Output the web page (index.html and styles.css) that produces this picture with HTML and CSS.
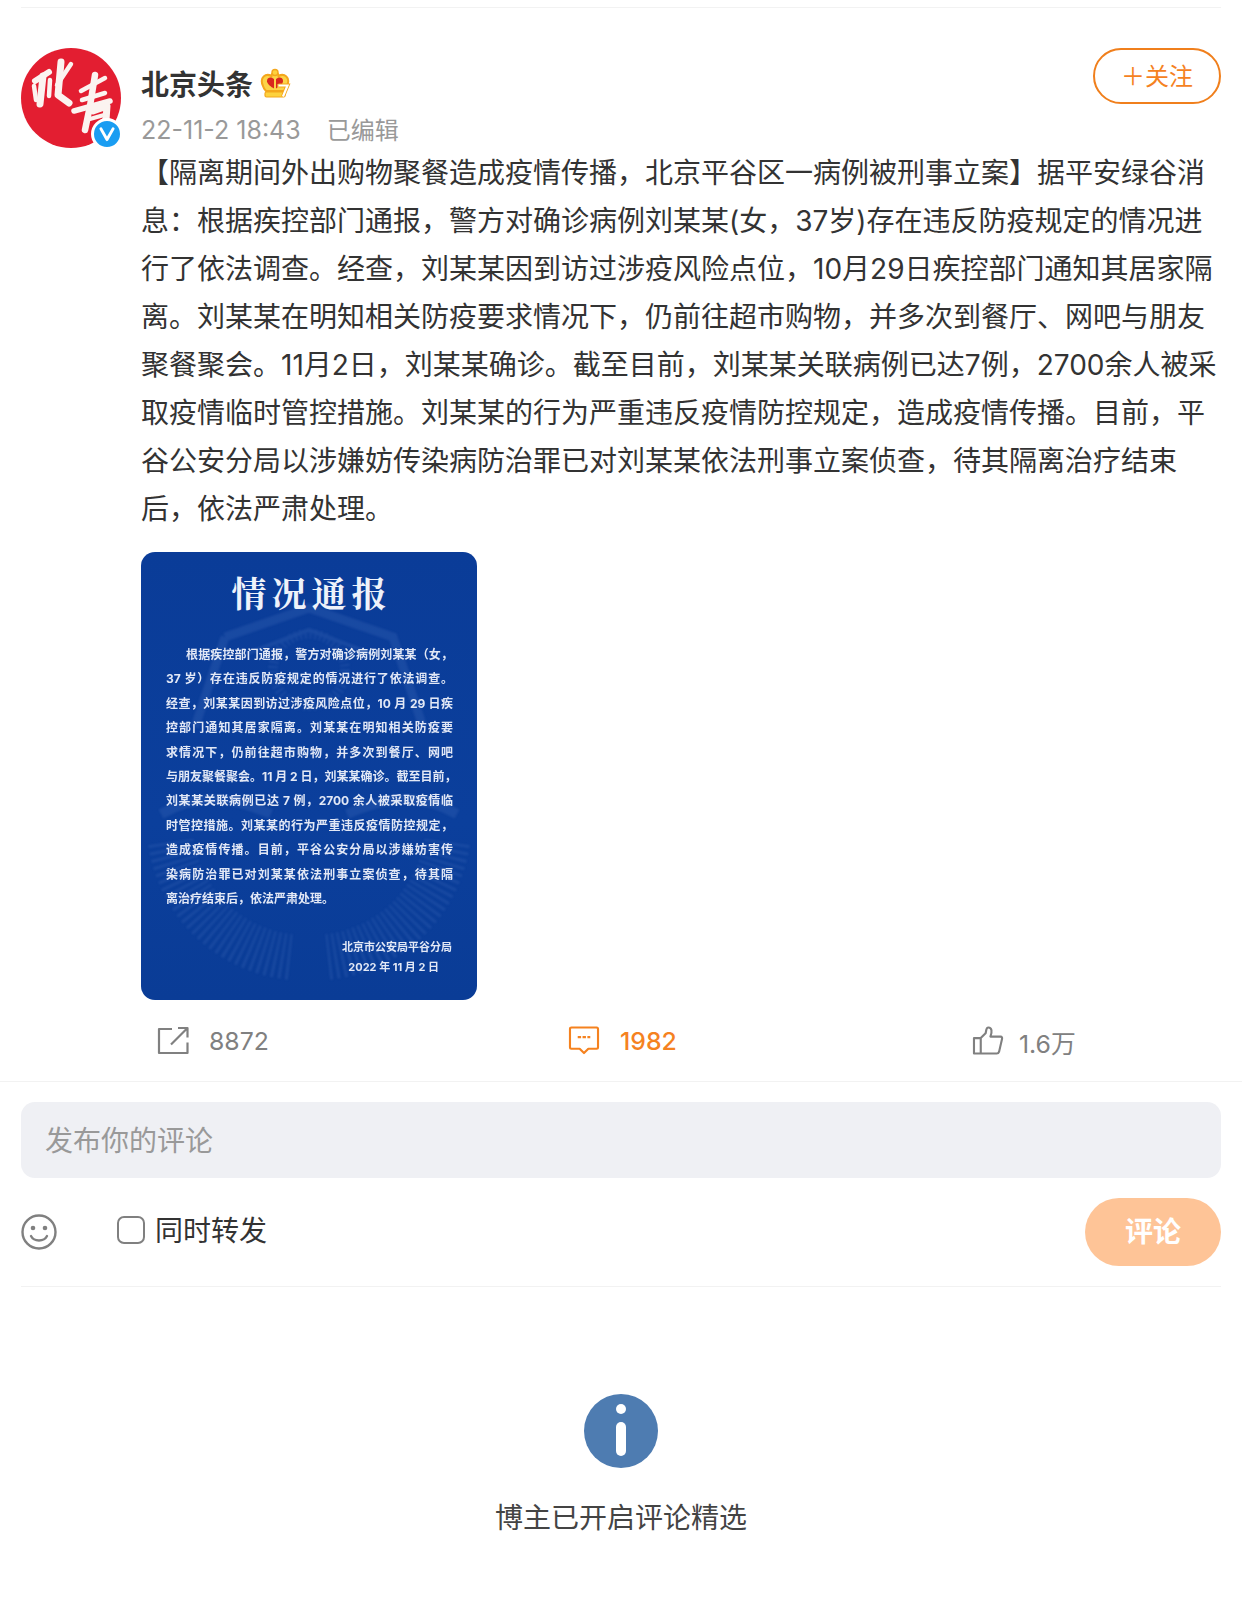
FILE: index.html
```html
<!DOCTYPE html>
<html lang="zh-CN">
<head>
<meta charset="utf-8">
<title>北京头条</title>
<link rel="stylesheet" href="styles.css">
</head>
<body>
<div class="rule"></div>
<article class="post">
  <div class="avatar">
    <svg class="avatar-svg" viewBox="0 0 100 100" aria-label="北青">
      <circle cx="50" cy="50" r="50" fill="#e31e31"/>
      <g fill="none" stroke="#fbf3f0" stroke-linecap="round" stroke-linejoin="round">
        <path d="M14 33 L28 24" stroke-width="6"/>
        <path d="M22 28 L19 56" stroke-width="7"/>
        <path d="M13 38 L15 52" stroke-width="4.5"/>
        <path d="M29 32 L28 48" stroke-width="4.5"/>
        <path d="M40 14 L37 47 L48 55" stroke-width="7"/>
        <path d="M50 16 L36 37" stroke-width="4.5"/>
        <path d="M60 43 L84 30" stroke-width="4.5"/>
        <path d="M61 52 L84 45" stroke-width="4.5"/>
        <path d="M53 63 L89 53" stroke-width="5.5"/>
        <path d="M74 27 L69 58 L64 82" stroke-width="6.5"/>
        <path d="M72 63 L86 58 L85 72 L77 79" stroke-width="7"/>
        <path d="M69 71 L83 67" stroke-width="4"/>
      </g>
    </svg>
    <span class="badge">
      <svg viewBox="0 0 28 28" class="badge-svg"><path d="M7.5 8.5 L14 20 L20.5 8.5" fill="none" stroke="#fff" stroke-width="3.2" stroke-linecap="round" stroke-linejoin="round"/></svg>
    </span>
  </div>
  <div class="main">
    <header class="head">
      <div class="meta">
        <div class="name-row">
          <span class="name">北京头条</span>
          <svg class="crown" viewBox="0 0 32 30">
            <path d="M4 18 C0 9 7 5 12.500 8 C13 3 19 3 19.500 8 C25 5 32 9 28 18 C27.500 20 26 22 25 23 H7 C6 22 4.500 20 4 18 Z" fill="#fcd448" stroke="#f4a71d" stroke-width="2"/>
            <path d="M15 11 C12 8 7.500 9.500 8 13.500 C8.500 16 12 19 15 20.500 Z" fill="#d9281e"/>
            <path d="M17 11 C20 8 24.500 9.500 24 13.500 C23.800 14.500 23.500 15 23 16 H18.500 V19.500 L17 20.500 Z" fill="#d9281e"/>
            <circle cx="16" cy="4.500" r="3" fill="#fdd23e" stroke="#f4a71d" stroke-width="1.400"/>
            <rect x="6" y="24" width="20" height="5" rx="1.500" fill="#fdd23e" stroke="#f4a71d" stroke-width="1.200"/>
            <path d="M19.500 17.500 H28.500 L24 28.500" fill="none" stroke="#f4a71d" stroke-width="4"/>
            <path d="M19.500 17.500 H28.500 L24 28.500" fill="none" stroke="#fff" stroke-width="2.200"/>
          </svg>
        </div>
        <div class="time"><span>22-11-2 18:43</span><span class="edited">已编辑</span></div>
      </div>
      <button class="follow">＋关注</button>
    </header>
    <p class="text">【隔离期间外出购物聚餐造成疫情传播，北京平谷区一病例被刑事立案】据平安绿谷消息：根据疾控部门通报，警方对确诊病例刘某某(女，37岁)存在违反防疫规定的情况进行了依法调查。经查，刘某某因到访过涉疫风险点位，10月29日疾控部门通知其居家隔离。刘某某在明知相关防疫要求情况下，仍前往超市购物，并多次到餐厅、网吧与朋友聚餐聚会。11月2日，刘某某确诊。截至目前，刘某某关联病例已达7例，2700余人被采取疫情临时管控措施。刘某某的行为严重违反疫情防控规定，造成疫情传播。目前，平谷公安分局以涉嫌妨传染病防治罪已对刘某某依法刑事立案侦查，待其隔离治疗结束后，依法严肃处理。</p>
    <figure class="notice">
      <svg class="emblem" viewBox="0 0 336 448" aria-hidden="true">
        <g fill="none" stroke="#3a66b6">
          <path d="M84 85 L168 56 L252 85 L282 175 M84 85 L54 175" stroke-width="9"/>
          <path d="M105 102 L168 78 L231 102" stroke-width="4"/>
          <circle cx="168" cy="118" r="36" stroke-width="10" stroke-dasharray="2 3"/>
          <path d="M30 290 A135 135 0 0 0 150 405" stroke-width="46" stroke-dasharray="2.500 4"/>
          <path d="M306 290 A135 135 0 0 1 186 405" stroke-width="46" stroke-dasharray="2.500 4"/>
          <path d="M20 262 C60 240 90 245 130 262 M316 262 C276 240 246 245 206 262" stroke-width="10"/>
        </g>
      </svg>
      <h2 class="notice-title">情况通报</h2>
      <div class="notice-body">
        <div class="nl first">根据疾控部门通报，警方对确诊病例刘某某（女，</div>
        <div class="nl">37 岁）存在违反防疫规定的情况进行了依法调查。</div>
        <div class="nl">经查，刘某某因到访过涉疫风险点位，10 月 29 日疾</div>
        <div class="nl">控部门通知其居家隔离。刘某某在明知相关防疫要</div>
        <div class="nl">求情况下，仍前往超市购物，并多次到餐厅、网吧</div>
        <div class="nl">与朋友聚餐聚会。11 月 2 日，刘某某确诊。截至目前，</div>
        <div class="nl">刘某某关联病例已达 7 例，2700 余人被采取疫情临</div>
        <div class="nl">时管控措施。刘某某的行为严重违反疫情防控规定，</div>
        <div class="nl">造成疫情传播。目前，平谷公安分局以涉嫌妨害传</div>
        <div class="nl">染病防治罪已对刘某某依法刑事立案侦查，待其隔</div>
        <div class="nl last">离治疗结束后，依法严肃处理。</div>
      </div>
      <div class="notice-sign">
        <div>北京市公安局平谷分局</div>
        <div class="sign-date">2022 年 11 月 2 日</div>
      </div>
    </figure>
  </div>
</article>
<div class="actions">
  <div class="act">
    <svg class="ico" viewBox="0 0 32 28"><path d="M15 2.500 H2 V26.500 H30.500 V16 M21 1.500 H30.500 V11 M30 2 L14 18" fill="none" stroke="#808080" stroke-width="2.200" stroke-linejoin="round"/></svg>
    <span>8872</span>
  </div>
  <div class="act act-on">
    <svg class="ico" viewBox="0 0 32 30"><path d="M3 1.500 H29 A1.500 1.500 0 0 1 30.500 3 V22 A1.500 1.500 0 0 1 29 23.500 H20.500 L16 28 L11.500 23.500 H3 A1.500 1.500 0 0 1 1.500 22 V3 A1.500 1.500 0 0 1 3 1.500 Z" fill="none" stroke="#f5821f" stroke-width="2.200" stroke-linejoin="round"/><path d="M9.500 11.500 H22.500" stroke="#f5821f" stroke-width="2.200" stroke-dasharray="3.500 1.500" fill="none"/></svg>
    <span>1982</span>
  </div>
  <div class="act act-like">
    <svg class="ico" viewBox="0 0 32 30"><path d="M1.500 12.500 H8.500 V28.500 H1.500 Z M8.500 12.500 L13.500 7.500 C14.500 5 13.500 1.500 16.500 1.500 C20 1.500 20.500 6 18.500 11 H29 C30.500 11 30.800 12.500 30.500 13.500 L27.500 26.500 C27 28 26 28.500 25 28.500 H8.500" fill="none" stroke="#808080" stroke-width="2.200" stroke-linejoin="round"/></svg>
    <span>1.6万</span>
  </div>
</div>
<div class="divider"></div>
<section class="composer">
  <div class="input">发布你的评论</div>
  <div class="compose-row">
    <svg class="smile" viewBox="0 0 36 36"><circle cx="18" cy="18" r="16.500" fill="none" stroke="#808080" stroke-width="2.400"/><circle cx="12" cy="14" r="2.300" fill="#808080"/><circle cx="24" cy="14" r="2.300" fill="#808080"/><path d="M10 22 C13 28 23 28 26 22" fill="none" stroke="#808080" stroke-width="2.400" stroke-linecap="round"/></svg>
    <label class="check"><span class="box"></span><span class="check-text">同时转发</span></label>
    <button class="submit">评论</button>
  </div>
</section>
<div class="rule rule-low"></div>
<section class="empty">
  <svg class="info" viewBox="0 0 74 74"><circle cx="37" cy="37" r="37" fill="#4e7cb1"/><circle cx="37" cy="15" r="5" fill="#fff"/><rect x="32" y="28" width="10" height="34" rx="5" fill="#fff"/></svg>
  <p class="empty-text">博主已开启评论精选</p>
</section>
</body>
</html>
```

FILE: styles.css
```css
* { box-sizing: border-box; }
html, body { margin: 0; padding: 0; }
body {
  width: 1242px;
  height: 1604px;
  overflow: hidden;
  padding-top: 7px;
  background: #fff;
  color: #333;
  font-family: "Inter", "Noto Sans CJK SC", sans-serif;
}
.rule { height: 1px; margin: 0 21px; background: #f2f2f2; }
.post { display: flex; gap: 20px; padding: 40px 21px 0; }
.avatar { position: relative; flex: none; width: 100px; height: 100px; }
.avatar-svg { display: block; width: 100px; height: 100px; }
.badge {
  position: absolute; right: -2px; bottom: -2px;
  width: 32px; height: 32px;
  border-radius: 50%;
  background: #1a9df2;
  border: 3px solid #fff;
  display: flex;
}
.badge-svg { width: 26px; height: 26px; }
.main { flex: 1; min-width: 0; }
.head { display: flex; justify-content: space-between; align-items: flex-start; height: 101px; }
.meta { padding-top: 15px; }
.name-row { display: flex; align-items: center; gap: 6px; height: 40px; }
.name { font-size: 28px; font-weight: 700; color: #333; }
.crown { width: 32px; height: 30px; }
.time { margin-top: 8px; height: 38px; line-height: 39px; font-size: 25px; color: #999; }
.edited { margin-left: 26px; font-size: 24px; }
.follow {
  width: 128px; height: 56px;
  padding: 0 0 4px;
  border: 2px solid #f07f1c;
  border-radius: 28px;
  background: #fff;
  color: #f5821f;
  font: 24px "Noto Sans CJK SC", sans-serif;
}
.text { margin: 0; font-size: 28px; line-height: 48px; color: #333; }
.notice {
  position: relative;
  margin: 19px 0 0;
  width: 336px; height: 448px;
  border-radius: 14px;
  overflow: hidden;
  background: linear-gradient(180deg, #0a3c98, #0b3f9c 60%, #0a3c96);
  color: #e2e8f6;
  padding-top: 18px;
}
.emblem { position: absolute; inset: 0; width: 336px; height: 448px; opacity: .32; filter: blur(1px); }
.notice-title {
  position: relative;
  margin: 0;
  height: 44px;
  padding-left: 5px;
  text-align: center;
  font: 700 35px/44px "Noto Serif CJK SC", "Noto Sans CJK SC", serif;
  letter-spacing: 5px;
  color: #eef2fa;
}
.notice-body {
  position: relative;
  margin: 29px 0 0 25px;
  width: 287px;
  font-size: 12px;
  font-weight: 700;
  line-height: 24.400px;
  filter: blur(.35px);
}
.nl { text-align: justify; text-align-last: justify; white-space: nowrap; }
.nl.first { padding-left: 20px; }
.nl.last { text-align-last: left; }
.notice-sign {
  position: relative;
  margin: 26px 0 0;
  padding-right: 25px;
  font-size: 11px;
  line-height: 20px;
  font-weight: 700;
  text-align: right;
  filter: blur(.35px);
}
.sign-date { padding-right: 13px; }
.actions {
  display: grid;
  grid-template-columns: 411px 404px auto;
  height: 81px;
  padding: 0 0 0 157px;
  align-items: center;
  color: #808080;
  font-size: 24.800px;
}
.act { display: flex; align-items: center; gap: 20px; }
.act-on { color: #f5821f; font-weight: 500; }
.act-like { gap: 15px; }
.act-like span { position: relative; top: 1px; }
.ico { width: 32px; height: 29px; }
.divider { height: 1px; background: #f2f2f2; }
.composer { padding: 20px 21px 0; }
.input {
  height: 76px;
  padding-left: 24px;
  line-height: 78px;
  border-radius: 14px;
  background: #eff0f4;
  color: #999;
  font-size: 28px;
}
.compose-row { display: flex; align-items: center; height: 68px; margin-top: 20px; }
.smile { width: 36px; height: 36px; flex: none; }
.check { display: flex; align-items: center; gap: 10px; margin: 0 0 4px 60px; font-size: 28px; color: #333; }
.check-text { position: relative; top: -1px; }
.box { width: 28px; height: 28px; border: 2px solid #808080; border-radius: 7px; }
.submit {
  margin-left: auto;
  width: 136px; height: 68px;
  padding: 0 0 4px;
  border: 0;
  border-radius: 34px;
  background: #fec497;
  color: #fff;
  font: 700 28px "Noto Sans CJK SC", sans-serif;
}
.rule-low { margin-top: 20px; }
.empty { display: flex; flex-direction: column; align-items: center; padding-top: 107px; }
.info { width: 74px; height: 74px; }
.empty-text { margin: 30px 0 0; font-size: 28px; line-height: 40px; color: #444; }
```
